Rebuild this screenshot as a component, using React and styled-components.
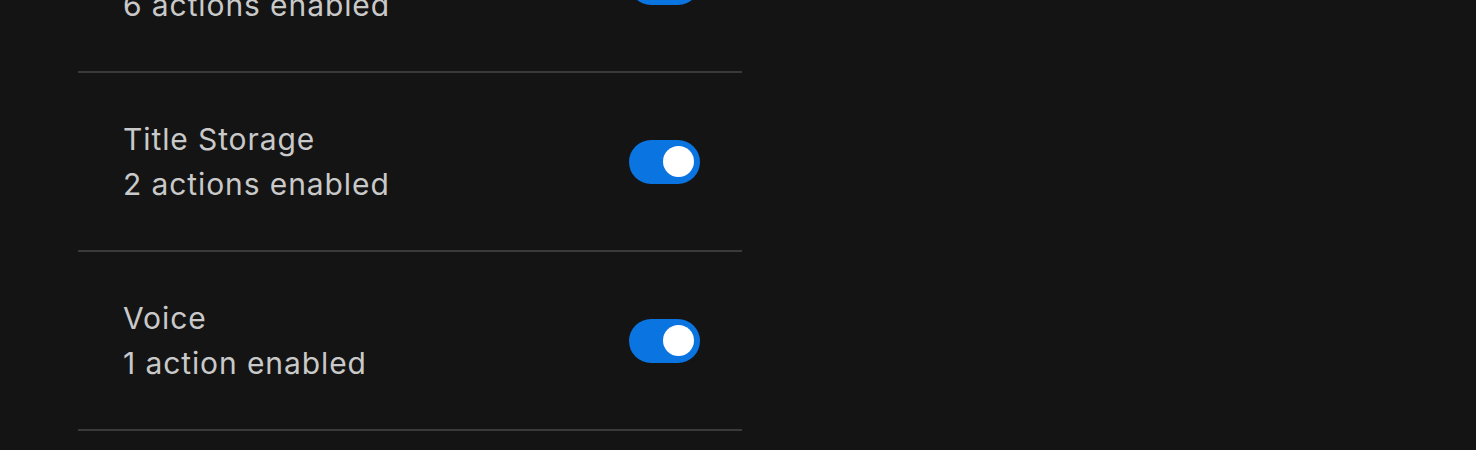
import styled, { createGlobalStyle } from 'styled-components'

const services = [
  { name: 'Achievements', count: 6 },
  { name: 'Title Storage', count: 2 },
  { name: 'Voice', count: 1 },
]

export default function App() {
  return (
    <>
      <GlobalStyle />
      <Page>
        <List>
          {services.map((item) => (
            <Row key={item.name}>
              <Info>
                <Name>{item.name}</Name>
                <Meta>
                  {item.count} {item.count === 1 ? 'action' : 'actions'} enabled
                </Meta>
              </Info>
              <Toggle role="switch" aria-checked="true" $on>
                <Knob />
              </Toggle>
            </Row>
          ))}
        </List>
      </Page>
    </>
  )
}

const GlobalStyle = createGlobalStyle`
  html, body {
    margin: 0;
    background: #141414;
  }
  body {
    font-family: Inter, "Noto Sans", sans-serif;
    overflow: hidden;
  }
`;
const Page = styled.div`
  width: 1476px;
  height: 450px;
  overflow: hidden;
  background: #141414;
`;
const List = styled.div`
  margin-top: -106px;
  margin-left: 78px;
  width: 664px;
`;
const Row = styled.div`
  display: flex;
  align-items: center;
  justify-content: space-between;
  height: 177px;
  padding: 0 42px 0 45px;
  border-bottom: 2px solid #3a3a3a;
`;
const Info = styled.div`
  display: flex;
  flex-direction: column;
`;
const Name = styled.div`
  font-size: 30px;
  line-height: 45px;
  letter-spacing: 0.9px;
  color: #c9c9c9;
`;
const Meta = styled.div`
  font-size: 30px;
  line-height: 45px;
  letter-spacing: 0.9px;
  color: #c9c9c9;
`;
const Toggle = styled.div`
  display: flex;
  align-items: center;
  justify-content: ${(p) => (p.$on ? 'flex-end' : 'flex-start')};
  box-sizing: border-box;
  width: 71px;
  height: 44px;
  padding: 0 6px;
  border-radius: 22px;
  background: ${(p) => (p.$on ? '#0a74e1' : '#4a4a4a')};
`;
const Knob = styled.div`
  width: 31px;
  height: 31px;
  border-radius: 50%;
  background: #ffffff;
`;
